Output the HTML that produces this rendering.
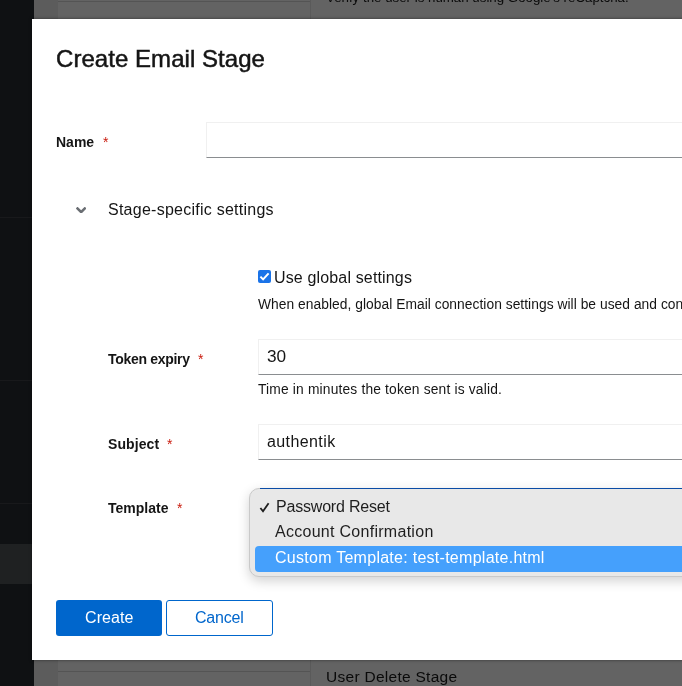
<!DOCTYPE html>
<html><head><meta charset="utf-8">
<style>
*{margin:0;padding:0;box-sizing:border-box}
html,body{-webkit-font-smoothing:antialiased;width:682px;height:686px;overflow:hidden;background:#636363;font-family:"Liberation Sans",sans-serif;color:#151515}
.abs{position:absolute}
#side{left:0;top:0;width:34px;height:686px;background:#0f1113}
.sline{left:0;width:32px;height:1px;background:#18191b}
#band{left:0;top:544px;width:34px;height:40px;background:#1f2122}
#colA{left:34px;top:0;width:24px;height:686px;background:#5c5c5c}
.hline{height:1px;background:#545454}
.vline{width:1px;background:#5a5a5a}
.bgtext{font-size:15.5px;color:#0a0a0a;white-space:nowrap}
#modal{left:32px;top:19px;width:700px;height:641px;background:#fff;box-shadow:0 0 3px rgba(0,0,0,.5)}
.t{position:absolute;white-space:nowrap;line-height:1;will-change:transform}
.lbl{font-weight:bold;font-size:14px}
.req{color:#c9190b;font-size:14px}
.inp{position:absolute;background:#fff;border:1px solid #f0f0f0;border-bottom-color:#8a8d90}
.help{font-size:13.8px}
</style></head><body>
<div id="side" class="abs"></div>
<div class="abs sline" style="top:217px"></div>
<div class="abs sline" style="top:380px"></div>
<div class="abs sline" style="top:503px"></div>
<div id="band" class="abs"></div>
<div id="colA" class="abs"></div>
<div class="abs hline" style="left:58px;top:1px;width:252px"></div>
<div class="abs vline" style="left:310px;top:0;height:19px"></div>
<div class="abs hline" style="left:58px;top:671px;width:252px"></div>
<div class="abs vline" style="left:310px;top:660px;height:26px"></div>
<div class="t bgtext" style="left:325.5px;top:-9px;font-size:13.3px">Verify the user is human using Google's reCaptcha.</div>
<div class="t bgtext" style="left:326px;top:668.5px;letter-spacing:0.28px">User Delete Stage</div>

<div id="modal" class="abs"></div>

<div class="t" style="left:55.6px;top:47px;font-size:24px;letter-spacing:0.05px;-webkit-text-stroke:0.5px #151515">Create Email Stage</div>

<div class="t lbl" style="left:56px;top:135px">Name</div>
<div class="t req" style="left:102.5px;top:135px">*</div>
<div class="inp" style="left:206px;top:122px;width:500px;height:36px"></div>

<svg class="abs" style="left:75.8px;top:206.9px" width="10.3" height="6.6" viewBox="0 153 320 206"><path fill="#6a6e73" d="M143 352.3L7 216.3c-9.4-9.4-9.4-24.6 0-33.9l22.6-22.6c9.4-9.4 24.6-9.4 33.9 0l96.4 96.4 96.4-96.4c9.4-9.4 24.6-9.4 33.9 0l22.6 22.6c9.4 9.4 9.4 24.6 0 33.9l-136 136c-9.4 9.5-24.6 9.5-34 .1z"/></svg>
<div class="t" style="left:107.5px;top:201.5px;font-size:16px;letter-spacing:0.25px">Stage-specific settings</div>

<div class="abs" style="left:258px;top:270px;width:13px;height:13px;background:#1a73e8;border-radius:2px"></div>
<svg class="abs" style="left:258px;top:270px" width="13" height="13" viewBox="0 0 13 13"><path d="M2.4 6.6 L5.1 9.4 L10.6 3.3" fill="none" stroke="#fff" stroke-width="2"/></svg>
<div class="t" style="left:274px;top:270px;font-size:16px;letter-spacing:0.15px">Use global settings</div>
<div class="t help" style="left:258px;top:298px;letter-spacing:0.04px">When enabled, global Email connection settings will be used and connection settings below will be ignored.</div>

<div class="t lbl" style="left:108px;top:352px;letter-spacing:-0.3px">Token expiry</div>
<div class="t req" style="left:198.3px;top:352px">*</div>
<div class="inp" style="left:258px;top:339px;width:500px;height:36px"></div>
<div class="t" style="left:266.5px;top:349px;font-size:15.7px;transform:scaleX(1.1);transform-origin:0 0">30</div>
<div class="t help" style="left:258px;top:383px;letter-spacing:0.17px">Time in minutes the token sent is valid.</div>

<div class="t lbl" style="left:107.5px;top:437px;letter-spacing:0.1px">Subject</div>
<div class="t req" style="left:166.5px;top:437px">*</div>
<div class="inp" style="left:258px;top:424px;width:500px;height:36px"></div>
<div class="t" style="left:266.5px;top:433.5px;font-size:16px;letter-spacing:0.4px">authentik</div>

<div class="t lbl" style="left:108px;top:501px">Template</div>
<div class="t req" style="left:176.5px;top:501px">*</div>

<!-- native popup -->
<div class="abs" style="left:249px;top:488px;width:460px;height:89px;background:#e8e8e8;border:1px solid #c9c9c9;border-radius:10px;box-shadow:0 4px 12px rgba(0,0,0,.18)"></div>
<div class="abs" style="left:260px;top:488px;width:450px;height:1px;background:#0a4ca6"></div>
<div class="abs" style="left:255px;top:546px;width:460px;height:26px;background:#45a0fc;border-radius:4px"></div>
<svg class="abs" style="left:259px;top:502px" width="12" height="11" viewBox="0 0 12 11"><path d="M1.4 6 L4 9.3 L9.6 1.2" fill="none" stroke="#1e1e1e" stroke-width="1.8"/></svg>
<div class="t" style="left:275.5px;top:498.5px;font-size:16px;letter-spacing:-0.2px;color:#1e1e1e">Password Reset</div>
<div class="t" style="left:274.5px;top:524.3px;font-size:16px;letter-spacing:0.28px;color:#1e1e1e">Account Confirmation</div>
<div class="t" style="left:274.5px;top:549.5px;font-size:16px;letter-spacing:0.27px;color:#fff">Custom Template: test-template.html</div>

<div class="abs" style="left:56px;top:600px;width:106px;height:36px;background:#0066cc;border-radius:3px"></div>
<div class="t" style="left:84.5px;top:609.5px;font-size:16px;letter-spacing:0.1px;color:#fff">Create</div>
<div class="abs" style="left:166px;top:600px;width:107px;height:36px;border:1px solid #0066cc;border-radius:3px"></div>
<div class="t" style="left:195px;top:609.5px;font-size:16px;letter-spacing:-0.2px;color:#0066cc">Cancel</div>
</body></html>
